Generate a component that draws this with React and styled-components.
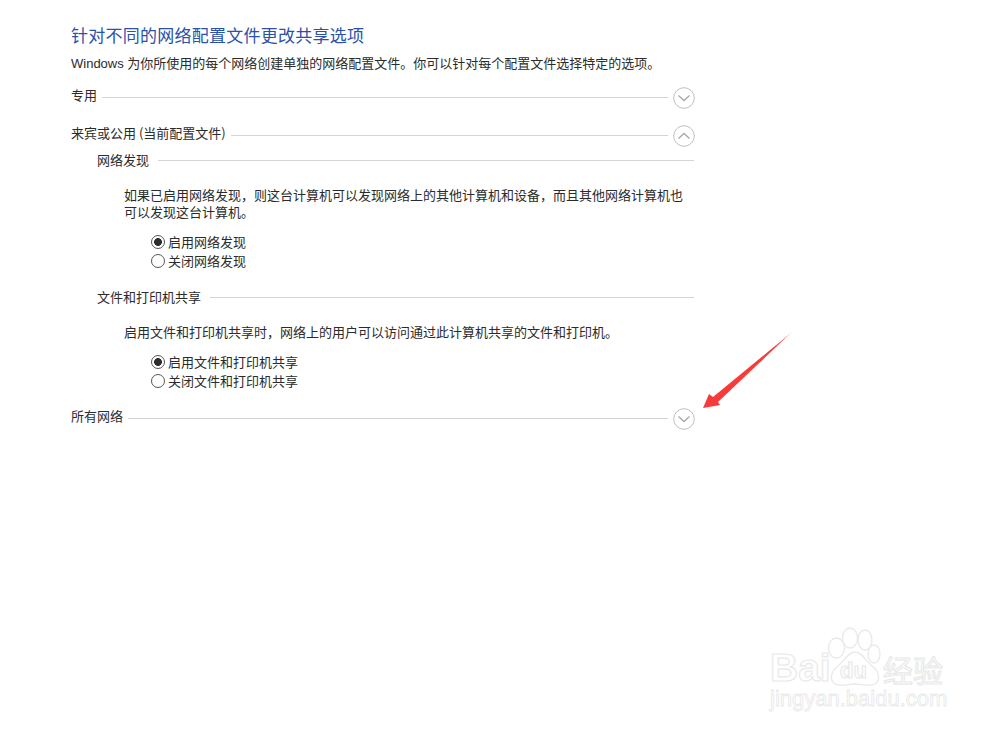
import React from "react";
import styled, { createGlobalStyle } from "styled-components";

const GlobalStyle = createGlobalStyle`
  html, body {
    margin: 0;
    padding: 0;
    background: #fff;
  }
`;

const Page = styled.div`
  position: relative;
  width: 1000px;
  height: 736px;
  overflow: hidden;
  box-sizing: border-box;
  padding: 25px 0 0 71px;
  background: #fff;
  font-family: "Noto Sans CJK SC", "Liberation Sans", sans-serif;
  color: #2b2b2b;
`;

const Content = styled.div`
  width: 623px;
`;

const Title = styled.h1`
  margin: 0;
  font-size: 17px;
  line-height: 20px;
  font-weight: 400;
  letter-spacing: 0.25px;
  color: #2a52a8;
`;

const Intro = styled.p`
  margin: 10px 0 0;
  font-size: 13px;
  line-height: 18px;
  font-family: "Liberation Sans", "Noto Sans CJK SC", sans-serif;
`;

const SectionRow = styled.div`
  display: flex;
  align-items: center;
  gap: 5px;
  height: 22px;
  margin-top: ${(p) => p.$top}px;
  font-size: 13px;
`;

const RowLabel = styled.span`
  margin-bottom: 3px;
`;

const Rule = styled.div`
  flex: 1;
  height: 1px;
  margin-top: 2px;
  background: #d4d4d4;
`;

const Toggle = styled.svg`
  width: 22px;
  height: 22px;
  flex: none;
  margin: 4px -1px 0 0;
`;

const SubRow = styled.div`
  display: flex;
  align-items: center;
  gap: 9px;
  height: 18px;
  margin: ${(p) => p.$top}px 0 0 26px;
  font-size: 13px;
`;

const Body = styled.p`
  margin: ${(p) => p.$top}px 0 0 53px;
  font-size: 13px;
  line-height: 17px;
`;

const RadioGroup = styled.div`
  display: flex;
  flex-direction: column;
  gap: 1px;
  margin: ${(p) => p.$top}px 0 0 80px;
`;

const RadioRow = styled.div`
  display: flex;
  align-items: center;
  gap: 3px;
  height: 18px;
  font-size: 13px;
`;

const RadioDot = styled.span`
  box-sizing: border-box;
  width: 14px;
  height: 14px;
  flex: none;
  margin-top: 2px;
  border: 1px solid #555;
  border-radius: 50%;
  background: ${(p) => (p.$on ? "radial-gradient(circle, #2c2c2c 0 3.6px, #fff 4.2px)" : "#fff")};
`;

const Arrow = styled.svg`
  position: absolute;
  left: 700px;
  top: 328px;
  width: 96px;
  height: 84px;
`;

const Watermark = styled.div`
  position: absolute;
  left: 768px;
  top: 628px;
  width: 180px;
  height: 88px;
`;

const BrandWord = styled.span`
  position: absolute;
  left: ${(p) => p.$left}px;
  top: ${(p) => p.$top}px;
  font-family: "Liberation Sans", sans-serif;
  font-size: ${(p) => p.$size}px;
  line-height: 1;
  font-weight: 700;
  color: #fff;
  -webkit-text-stroke: 1.2px #e9e9e9;
`;

const BrandCjk = styled(BrandWord)`
  font-family: "Noto Sans CJK SC", sans-serif;
  font-weight: 400;
`;

const DomainText = styled.span`
  position: absolute;
  left: 2px;
  top: 60px;
  font-family: "Liberation Sans", sans-serif;
  font-size: 22px;
  line-height: 22px;
  color: #fff;
  -webkit-text-stroke: 0.8px #e8e8e8;
  white-space: nowrap;
`;

const Paw = styled.svg`
  position: absolute;
  left: 58px;
  top: -2px;
  width: 60px;
  height: 62px;
`;

const Chevron = ({ up }) => (
  <Toggle viewBox="0 0 22 22" fill="none">
    <circle cx="11" cy="11" r="10.3" stroke="#c0c0c0" strokeWidth="1" />
    <path d={up ? "M5.5 13.5 11 8.5l5.5 5" : "M5.5 8.5 11 13.5l5.5-5"} stroke="#a8a8a8" strokeWidth="1.3" />
  </Toggle>
);

const Radio = ({ on, children }) => (
  <RadioRow>
    <RadioDot $on={on} />
    {children}
  </RadioRow>
);

export default function App() {
  return (
    <Page>
      <GlobalStyle />
      <Content>
        <Title>针对不同的网络配置文件更改共享选项</Title>
        <Intro>Windows 为你所使用的每个网络创建单独的网络配置文件。你可以针对每个配置文件选择特定的选项。</Intro>

        <SectionRow $top={12}>
          <RowLabel>专用</RowLabel>
          <Rule />
          <Chevron />
        </SectionRow>
        <SectionRow $top={16}>
          <RowLabel>来宾或公用 (当前配置文件)</RowLabel>
          <Rule />
          <Chevron up />
        </SectionRow>

        <SubRow $top={5}>
          网络发现
          <Rule />
        </SubRow>
        <Body $top={18}>
          如果已启用网络发现，则这台计算机可以发现网络上的其他计算机和设备，而且其他网络计算机也
          <br />
          可以发现这台计算机。
        </Body>
        <RadioGroup $top={12}>
          <Radio on>启用网络发现</Radio>
          <Radio>关闭网络发现</Radio>
        </RadioGroup>

        <SubRow $top={18}>
          文件和打印机共享
          <Rule />
        </SubRow>
        <Body $top={18}>启用文件和打印机共享时，网络上的用户可以访问通过此计算机共享的文件和打印机。</Body>
        <RadioGroup $top={12}>
          <Radio on>启用文件和打印机共享</Radio>
          <Radio>关闭文件和打印机共享</Radio>
        </RadioGroup>

        <SectionRow $top={17}>
          <RowLabel>所有网络</RowLabel>
          <Rule />
          <Chevron />
        </SectionRow>
      </Content>

      <Arrow viewBox="0 0 96 84">
        <defs>
          <linearGradient id="fade" x1="0" y1="1" x2="1" y2="0">
            <stop offset="0.8" stopColor="#f83a3a" />
            <stop offset="1" stopColor="#f9a8a8" />
          </linearGradient>
        </defs>
        <path d="M3 80 9 66l4 3L92.5 3.5 18 74l2 3Z" fill="url(#fade)" />
      </Arrow>

      <Watermark>
        <Paw viewBox="58 -2 60 62" fill="#fff" stroke="#e9e9e9" strokeWidth="1.3">
          <ellipse cx="68.5" cy="20" rx="8" ry="10" />
          <ellipse cx="82" cy="10" rx="7.5" ry="10" />
          <ellipse cx="97" cy="12" rx="7" ry="10" />
          <ellipse cx="106" cy="26" rx="6" ry="9" />
          <path d="M87 24C80 24 76 33 70 38 63 43 61 52 67 56 73 59 80 56 87 56 94 56 101 59 107 56 113 52 111 43 104 38 98 33 94 24 87 24Z" />
        </Paw>
        <BrandWord $left={2} $top={20} $size={39}>Bai</BrandWord>
        <BrandWord $left={72} $top={32} $size={22}>du</BrandWord>
        <BrandCjk $left={115} $top={26} $size={30}>经验</BrandCjk>
        <DomainText>jingyan.baidu.com</DomainText>
      </Watermark>
    </Page>
  );
}
